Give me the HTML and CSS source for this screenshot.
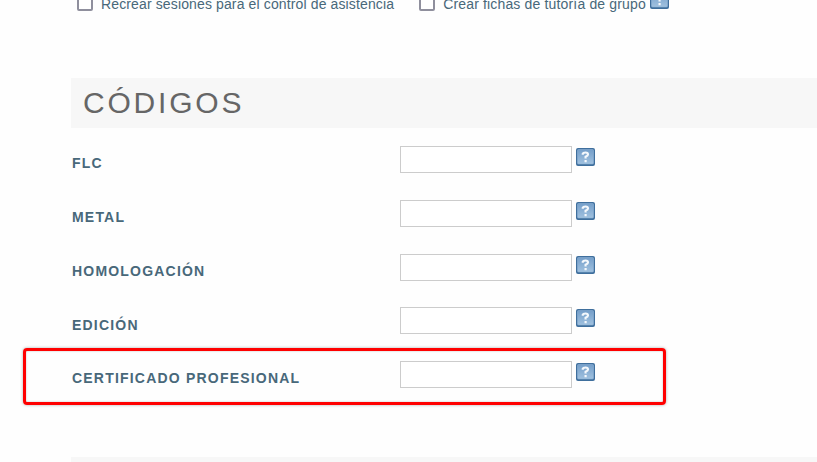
FILE: index.html
```html
<!DOCTYPE html>
<html lang="es">
<head>
    <meta charset="UTF-8">
    <meta name="viewport" content="width=device-width, initial-scale=1.0">
    <title>Códigos</title>
    <link rel="stylesheet" href="styles.css">
</head>
<body>
    <svg class="defs" width="0" height="0">
        <defs>
            <linearGradient id="azul" x1="0" y1="0" x2="0" y2="1">
                <stop offset="0" stop-color="#759fca"/>
                <stop offset="1" stop-color="#a0c1df"/>
            </linearGradient>
            <symbol id="ayuda" viewBox="0 0 19 18">
                <rect x="0" y="0" width="19" height="18" rx="2" fill="#3f6f9d"/>
                <rect x="1.5" y="1.5" width="16" height="14.5" rx="1" fill="url(#azul)" stroke="#8fb2d5" stroke-width="0.6"/>
                <path d="M6.8 6.8V5.6Q7.2 4.5 9.4 4.5Q12 4.5 12 6.4Q12 7.6 9.6 8.7V10.6M9.6 12V14.2" fill="none" stroke="#f4f8fc" stroke-width="2.2"/>
            </symbol>
        </defs>
    </svg>
    <form>
        <div class="opciones">
            <label class="opcion"><input type="checkbox"><span>Recrear sesiones para el control de asistencia</span></label>
            <label class="opcion"><input type="checkbox"><span>Crear fichas de tutoría de grupo</span></label>
            <svg class="ayuda"><use href="#ayuda"/></svg>
        </div>

        <h2>CÓDIGOS</h2>
        <div class="campos">
            <div class="campo">
                <label for="flc">FLC</label>
                <input type="text" id="flc" name="flc">
                <svg class="ayuda"><use href="#ayuda"/></svg>
            </div>
            <div class="campo">
                <label for="metal">METAL</label>
                <input type="text" id="metal" name="metal">
                <svg class="ayuda"><use href="#ayuda"/></svg>
            </div>
            <div class="campo">
                <label for="homologacion">HOMOLOGACIÓN</label>
                <input type="text" id="homologacion" name="homologacion">
                <svg class="ayuda"><use href="#ayuda"/></svg>
            </div>
            <div class="campo">
                <label for="edicion">EDICIÓN</label>
                <input type="text" id="edicion" name="edicion">
                <svg class="ayuda"><use href="#ayuda"/></svg>
            </div>
        </div>
        <div class="campo destacado">
            <label for="certificado">CERTIFICADO PROFESIONAL</label>
            <input type="text" id="certificado" name="certificado">
            <svg class="ayuda"><use href="#ayuda"/></svg>
        </div>
        <div class="siguiente"></div>
    </form>
</body>
</html>
```
FILE: styles.css
```css
* {
    box-sizing: border-box;
}
body {
    margin: 0;
    height: 462px;
    overflow: hidden;
    background-color: #fefefe;
    color: #48687a;
    font-family: "Liberation Sans", Arial, sans-serif;
}
.defs {
    display: block;
}
.ayuda {
    width: 19px;
    height: 18px;
    flex: none;
}
.opciones {
    display: flex;
    align-items: flex-start;
    height: 24px;
    margin-top: -9px;
    padding-left: 77px;
    font-size: 14px;
    letter-spacing: 0.13px;
}
.opcion {
    display: flex;
    align-items: flex-start;
    line-height: 16px;
    white-space: nowrap;
}
.opcion span {
    margin-top: 5px;
}
.opcion + .opcion {
    margin-left: 25px;
    letter-spacing: 0.16px;
}
.opcion input {
    appearance: none;
    width: 16px;
    height: 16px;
    margin: 4px 8px 0 0;
    border: 2px solid #8f8f9d;
    border-radius: 2px;
    background-color: #fff;
}
.opciones .ayuda {
    margin-left: 4px;
}
h2 {
    height: 50px;
    margin: 63px 0 0 71px;
    padding-left: 12px;
    background-color: #f7f7f7;
    color: #666;
    font-size: 30px;
    font-weight: normal;
    letter-spacing: 2.8px;
    line-height: 50px;
}
.campos {
    padding: 18px 0 0 72px;
}
.campo {
    display: flex;
    align-items: flex-start;
    height: 53.8px;
}
.campo label {
    width: 328px;
    margin-top: 9.3px;
    font-size: 14px;
    font-weight: bold;
    letter-spacing: 1.2px;
    line-height: 16px;
}
.campo input {
    width: 172px;
    height: 27px;
    padding: 4px;
    border: 1px solid #ccc;
    background-color: #fff;
}
.campo .ayuda {
    margin: 2px 0 0 4px;
}
.destacado {
    width: 643px;
    height: 57px;
    margin: -13.2px 0 0 23px;
    padding: 10px 0 0 46px;
    border: 3px solid #f00;
    border-radius: 4px;
    box-shadow: 0 0 3px #aaa, inset 0 0 2px #bbb;
}
.siguiente {
    height: 10px;
    margin: 52px 0 0 71px;
    background-color: #f7f7f7;
}
```
